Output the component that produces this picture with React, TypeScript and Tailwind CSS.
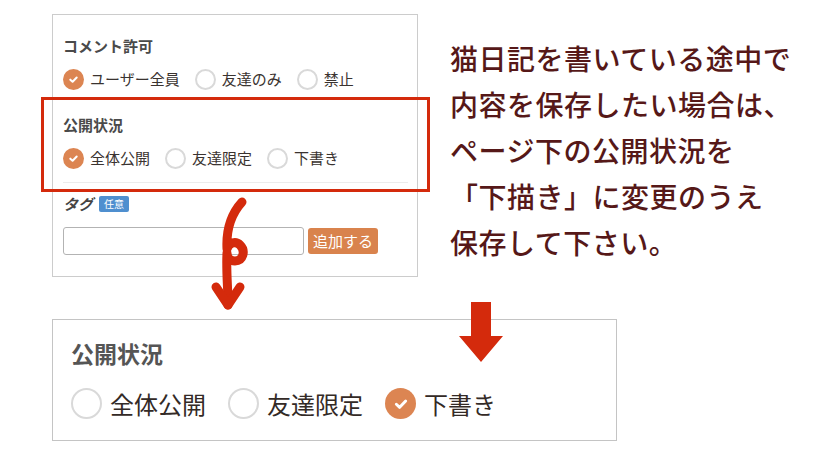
import React from 'react'

const FONT = "font-['Noto_Sans_CJK_JP','Noto_Sans',sans-serif]"

const Radio = ({ checked, size = 'sm' }: { checked?: boolean; size?: 'sm' | 'lg' }) => {
  const dim = size === 'sm' ? 'w-[21px] h-[21px]' : 'w-[31px] h-[31px]'
  const icon = size === 'sm' ? 11 : 16
  if (checked) {
    return (
      <span className={`${dim} shrink-0 rounded-full bg-[#dc8552] flex items-center justify-center`}>
        <svg width={icon} height={icon} viewBox="0 0 12 12" fill="none">
          <path d="M2.5 6.2 L5 8.5 L9.5 3.8" stroke="#fff" strokeWidth="2.2" strokeLinecap="round" strokeLinejoin="round" />
        </svg>
      </span>
    )
  }
  return <span className={`${dim} shrink-0 rounded-full border-2 border-[#d9d9d9] bg-white`} />
}

const SmallOption = ({ label, checked }: { label: string; checked?: boolean }) => (
  <div className="flex items-center gap-[6px]">
    <Radio checked={checked} />
    <span className="text-[15px] leading-[22px] text-[#3a3330]">{label}</span>
  </div>
)

const BigOption = ({ label, checked }: { label: string; checked?: boolean }) => (
  <div className="flex items-center gap-[8px]">
    <Radio checked={checked} size="lg" />
    <span className="text-[24px] leading-[30px] text-[#332a26]">{label}</span>
  </div>
)

export default function App() {
  return (
    <div className={`relative w-[840px] h-[470px] bg-white overflow-hidden ${FONT}`}>
      <div className="flex pl-[52px] pt-[14px]">
        {/* settings panel */}
        <div className="w-[366px] h-[263px] border border-[#cccccc] pl-[10px] pr-[9px] pt-[21px]">
          <div className="text-[15px] leading-[20px] font-bold text-[#4a4a4a]">コメント許可</div>
          <div className="mt-[12px] flex items-center gap-[15px]">
            <SmallOption label="ユーザー全員" checked />
            <SmallOption label="友達のみ" />
            <SmallOption label="禁止" />
          </div>
          <div className="mt-[25px] text-[15px] leading-[20px] font-bold text-[#4a4a4a]">公開状況</div>
          <div className="mt-[12px] flex items-center gap-[15px]">
            <SmallOption label="全体公開" checked />
            <SmallOption label="友達限定" />
            <SmallOption label="下書き" />
          </div>
          <div className="mt-[13px] h-px bg-[#ececec]" />
          <div className="mt-[11px] flex items-center gap-[6px] h-[20px]">
            <span className="text-[15px] font-bold italic text-[#444]">タグ</span>
            <span className="h-[16px] px-[5px] bg-[#4f8fcf] text-white text-[10px] leading-[16px] rounded-[2px]">任意</span>
          </div>
          <div className="mt-[13px] flex items-center gap-[4px]">
            <div className="w-[241px] h-[28px] border border-[#b3b3b3] rounded-[3px] bg-white" />
            <button className="w-[70px] h-[26px] rounded-[3px] bg-[#d9834d] text-white text-[15px] leading-[26px]">追加する</button>
          </div>
        </div>

        {/* note */}
        <div className="ml-[32px] mt-[21px] text-[28px] leading-[46px] font-medium text-[#561818] tracking-[0.5px]">
          <div>猫日記を書いている途中で</div>
          <div>内容を保存したい場合は、</div>
          <div>ページ下の公開状況を</div>
          <div>「下描き」に変更のうえ</div>
          <div>保存して下さい。</div>
        </div>
      </div>

      {/* enlarged status panel */}
      <div className="ml-[52px] mt-[42px] w-[565px] h-[122px] border border-[#c4c4c4] pl-[18px] pt-[18px]">
        <div className="text-[23px] leading-[30px] font-bold text-[#555]">公開状況</div>
        <div className="mt-[20px] flex items-center gap-[22px]">
          <BigOption label="全体公開" />
          <BigOption label="友達限定" />
          <BigOption label="下書き" checked />
        </div>
      </div>

      {/* highlight box */}
      <div className="absolute left-[41px] top-[97px] w-[389px] h-[95px] border-[3px] border-[#d42a0c]" />

      {/* curly arrow */}
      <svg className="absolute left-[190px] top-[195px]" width="80" height="120" viewBox="0 0 80 120" fill="none">
        <path
          d="M52 7 C42 18 36 34 37 54 C39 47 46 46 50 50 C56 56 53 66 45 66 C40 66 37 62 37 58 C36 76 38 92 38 110"
          stroke="#d42a0c"
          strokeWidth="9"
          strokeLinecap="round"
          strokeLinejoin="round"
        />
        <path d="M26 92 L38 110 L50 92" stroke="#d42a0c" strokeWidth="9" strokeLinecap="round" strokeLinejoin="round" />
      </svg>

      {/* block arrow */}
      <svg className="absolute left-[459px] top-[302px]" width="44" height="61" viewBox="0 0 44 61">
        <path d="M12 0 H32 V34 H44 L22 60 L0 34 H12 Z" fill="#d42a0c" />
      </svg>
    </div>
  )
}
